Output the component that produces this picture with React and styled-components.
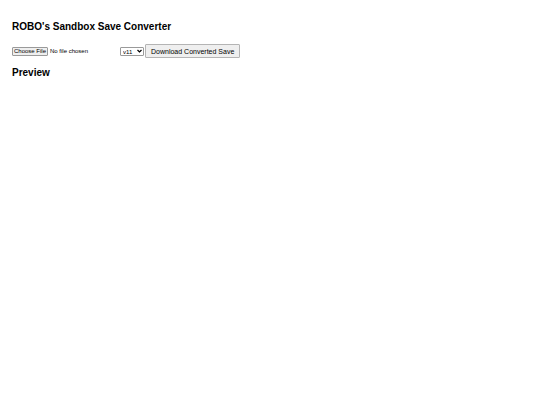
import { useState } from "react";
import styled, { createGlobalStyle } from "styled-components";

const GlobalStyle = createGlobalStyle`
  body {
    margin: 0;
    padding: 20px 12px;
    background: #fff;
    color: #000;
    font-family: "Liberation Sans", Arial, sans-serif;
  }
`;

const Heading = styled.h2`
  margin: 0;
  font-size: 10px;
  line-height: 14px;
  font-weight: 700;
`;

const Controls = styled.div`
  display: flex;
  align-items: center;
  gap: 1px;
  margin: 10px 0 8px;
`;

const FileInput = styled.input`
  width: 107px;
  font-family: inherit;
  font-size: 6px;
  line-height: 7px;

  &::file-selector-button {
    box-sizing: border-box;
    height: 9px;
    margin: 0 2px 0 0;
    padding: 0 1px;
    border: 1px solid #9a9a9a;
    border-radius: 1px;
    background: #efefef;
    color: #000;
    font: inherit;
  }
`;

const SelectWrap = styled.div`
  display: grid;
  align-items: center;
  width: 24px;

  > * {
    grid-area: 1 / 1;
  }
`;

const VersionSelect = styled.select`
  appearance: none;
  width: 100%;
  height: 9px;
  box-sizing: border-box;
  padding: 1px 2px 0;
  border: 1px solid #9a9a9a;
  border-radius: 1px;
  background: #fff;
  color: #000;
  font-family: inherit;
  font-size: 6px;
  line-height: 6px;
`;

const Arrow = styled.svg`
  justify-self: end;
  width: 5px;
  height: 4px;
  margin-right: 2px;
  pointer-events: none;
`;

const DownloadButton = styled.button`
  box-sizing: border-box;
  height: 14px;
  padding: 1px 5px 0;
  border: 1px solid #b4b4b4;
  border-radius: 1px;
  background: #efefef;
  color: #000;
  font-family: inherit;
  font-size: 7px;
  line-height: 11px;
`;

const versions = ["v11", "v10", "v9"];

function App() {
  const [version, setVersion] = useState("v11");

  return (
    <>
      <GlobalStyle />
      <main>
        <Heading>ROBO's Sandbox Save Converter</Heading>
        <Controls>
          <FileInput type="file" aria-label="Save file" />
          <SelectWrap>
            <VersionSelect
              aria-label="Target version"
              value={version}
              onChange={(e) => setVersion(e.target.value)}
            >
              {versions.map((v) => (
                <option key={v} value={v}>
                  {v}
                </option>
              ))}
            </VersionSelect>
            <Arrow viewBox="0 0 10 8" aria-hidden="true">
              <path d="M1 2l4 4 4-4" fill="none" stroke="#000" strokeWidth="2.4" />
            </Arrow>
          </SelectWrap>
          <DownloadButton type="button">Download Converted Save</DownloadButton>
        </Controls>
        <Heading>Preview</Heading>
      </main>
    </>
  );
}

export default App;
